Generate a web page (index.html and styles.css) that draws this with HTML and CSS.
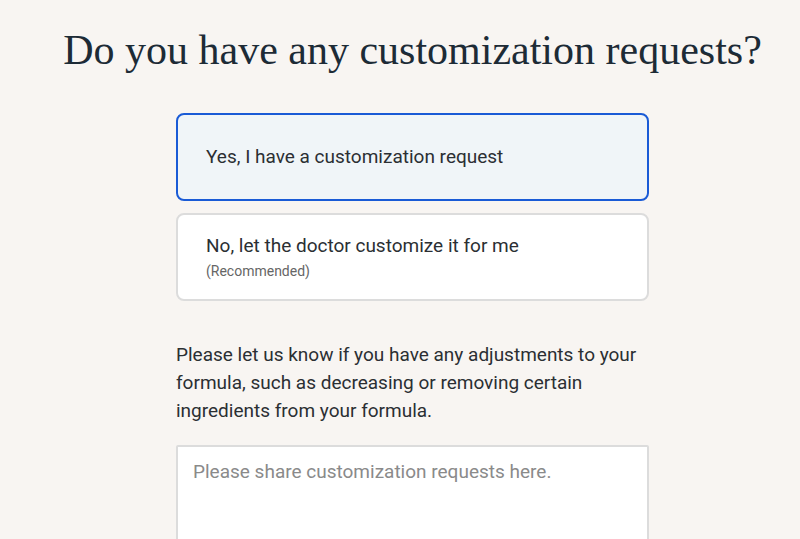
FILE: index.html
```html
<!DOCTYPE html>
<html lang="en">
<head>
  <meta charset="UTF-8">
  <meta name="viewport" content="width=device-width, initial-scale=1.0">
  <title>Customization</title>
  <link rel="stylesheet" href="styles.css">
</head>
<body>
  <div class="page">
    <h1 class="question">Do you have any customization requests?</h1>

    <div class="options">
      <div class="option selected">
        <span class="option-label">Yes, I have a customization request</span>
      </div>
      <div class="option">
        <span class="option-label">No, let the doctor customize it for me</span>
        <span class="option-note">(Recommended)</span>
      </div>
    </div>

    <p class="hint">Please let us know if you have any adjustments to your formula, such as decreasing or removing certain ingredients from your formula.</p>

    <textarea class="request-box" placeholder="Please share customization requests here."></textarea>
  </div>
</body>
</html>
```

FILE: styles.css
```css
/* General Styles */
html, body {
  height: 100%;
}

body {
  margin: 0;
  padding: 0;
  background-color: #f8f5f2;
  font-family: 'Roboto', 'Liberation Sans', sans-serif;
  color: #2b2f33;
  overflow: hidden;
}

.page {
  display: flex;
  flex-direction: column;
  align-items: center;
  padding: 27px 0 0 25px;
}

.question {
  margin: 0 0 40px;
  font-family: 'Liberation Serif', 'DejaVu Serif', serif;
  font-weight: normal;
  font-size: 42px;
  line-height: 46px;
  color: #1d2b36;
  white-space: nowrap;
}

/* Options */
.options {
  width: 473px;
  display: flex;
  flex-direction: column;
  gap: 12px;
}

.option {
  box-sizing: border-box;
  height: 88px;
  padding: 0 28px;
  display: flex;
  flex-direction: column;
  justify-content: center;
  background-color: #fff;
  border: 2px solid #dcdcdc;
  border-radius: 8px;
}

.option.selected {
  background-color: #f0f5f8;
  border-color: #1a5bd6;
}

.option-label {
  font-size: 19px;
  line-height: 24px;
  color: #2b2f33;
}

.option-note {
  margin-top: 4px;
  font-size: 14px;
  line-height: 18px;
  color: #666;
}

/* Hint + textarea */
.hint {
  width: 473px;
  margin: 40px 0 0;
  font-size: 19px;
  line-height: 28px;
  color: #2b2f33;
}

.request-box {
  box-sizing: border-box;
  width: 473px;
  height: 140px;
  margin-top: 20px;
  padding: 13px 15px;
  border: 2px solid #dcdcdc;
  border-radius: 2px;
  background-color: #fff;
  font-family: 'Roboto', 'Liberation Sans', sans-serif;
  font-size: 19px;
  line-height: 24px;
  resize: none;
}

.request-box::placeholder {
  color: #8a8a8a;
}
```
